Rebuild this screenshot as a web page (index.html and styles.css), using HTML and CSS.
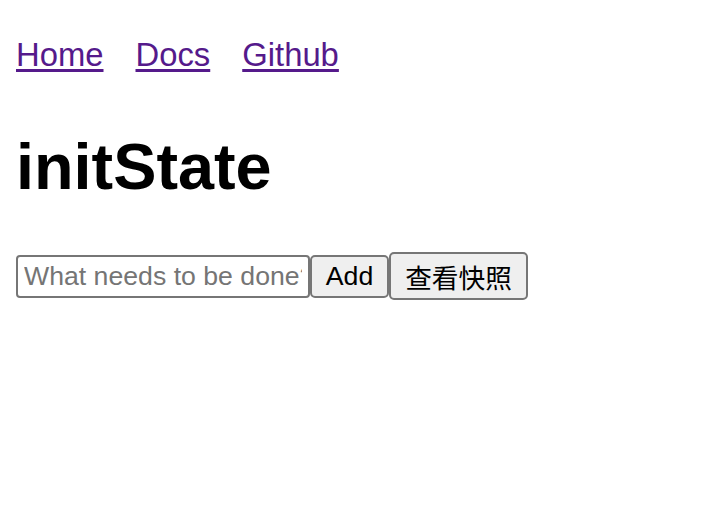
FILE: index.html
```html
<!DOCTYPE html>
<html>
<head>
<meta charset="utf-8">
<link rel="stylesheet" href="styles.css">
</head>
<body>
<nav class="nav">
  <a class="nav-link" href="#">Home</a>
  <a class="nav-link" href="#">Docs</a>
  <a class="nav-link" href="#">Github</a>
</nav>
<h1 class="title">initState</h1>
<div class="row"><input class="todo-input" type="text" placeholder="What needs to be done?"><button class="btn btn-add">Add</button><button class="btn btn-snap">查看快照</button></div>
</body>
</html>
```
FILE: styles.css
```css
html, body {
  margin: 0;
  padding: 0;
  background: #fff;
}
body {
  padding: 0 16px;
  font-family: "Liberation Sans", Arial, "Noto Sans CJK SC", sans-serif;
  color: #000;
}
.nav {
  display: flex;
  gap: 32px;
  padding-top: 36px;
  font-size: 32.8px;
  line-height: 37px;
}
.nav-link {
  color: #551a8b;
  text-decoration: underline;
  text-underline-offset: 3px;
  text-decoration-thickness: 2.5px;
}
.title {
  margin: 0;
  padding-top: 57px;
  font-size: 64.8px;
  line-height: 74px;
  font-weight: bold;
}
.row {
  display: flex;
  align-items: center;
  margin-top: 48px;
}
.todo-input {
  box-sizing: border-box;
  width: 294px;
  height: 43px;
  margin: 0;
  padding: 0 6px;
  border: 2px solid #767676;
  border-radius: 4px;
  font-family: "Liberation Sans", Arial, sans-serif;
  font-size: 26.67px;
  color: #000;
  background: #fff;
}
.todo-input::placeholder {
  color: #757575;
}
.btn {
  box-sizing: border-box;
  margin: 0;
  border: 2px solid #767676;
  border-radius: 5px;
  background: #efefef;
  color: #000;
  font-size: 26.67px;
  font-family: "Liberation Sans", Arial, "Noto Sans CJK SC", sans-serif;
  padding: 0 12px;
}
.btn-add {
  width: 79px;
  height: 43px;
}
.btn-snap {
  width: 139px;
  height: 48px;
}
```
